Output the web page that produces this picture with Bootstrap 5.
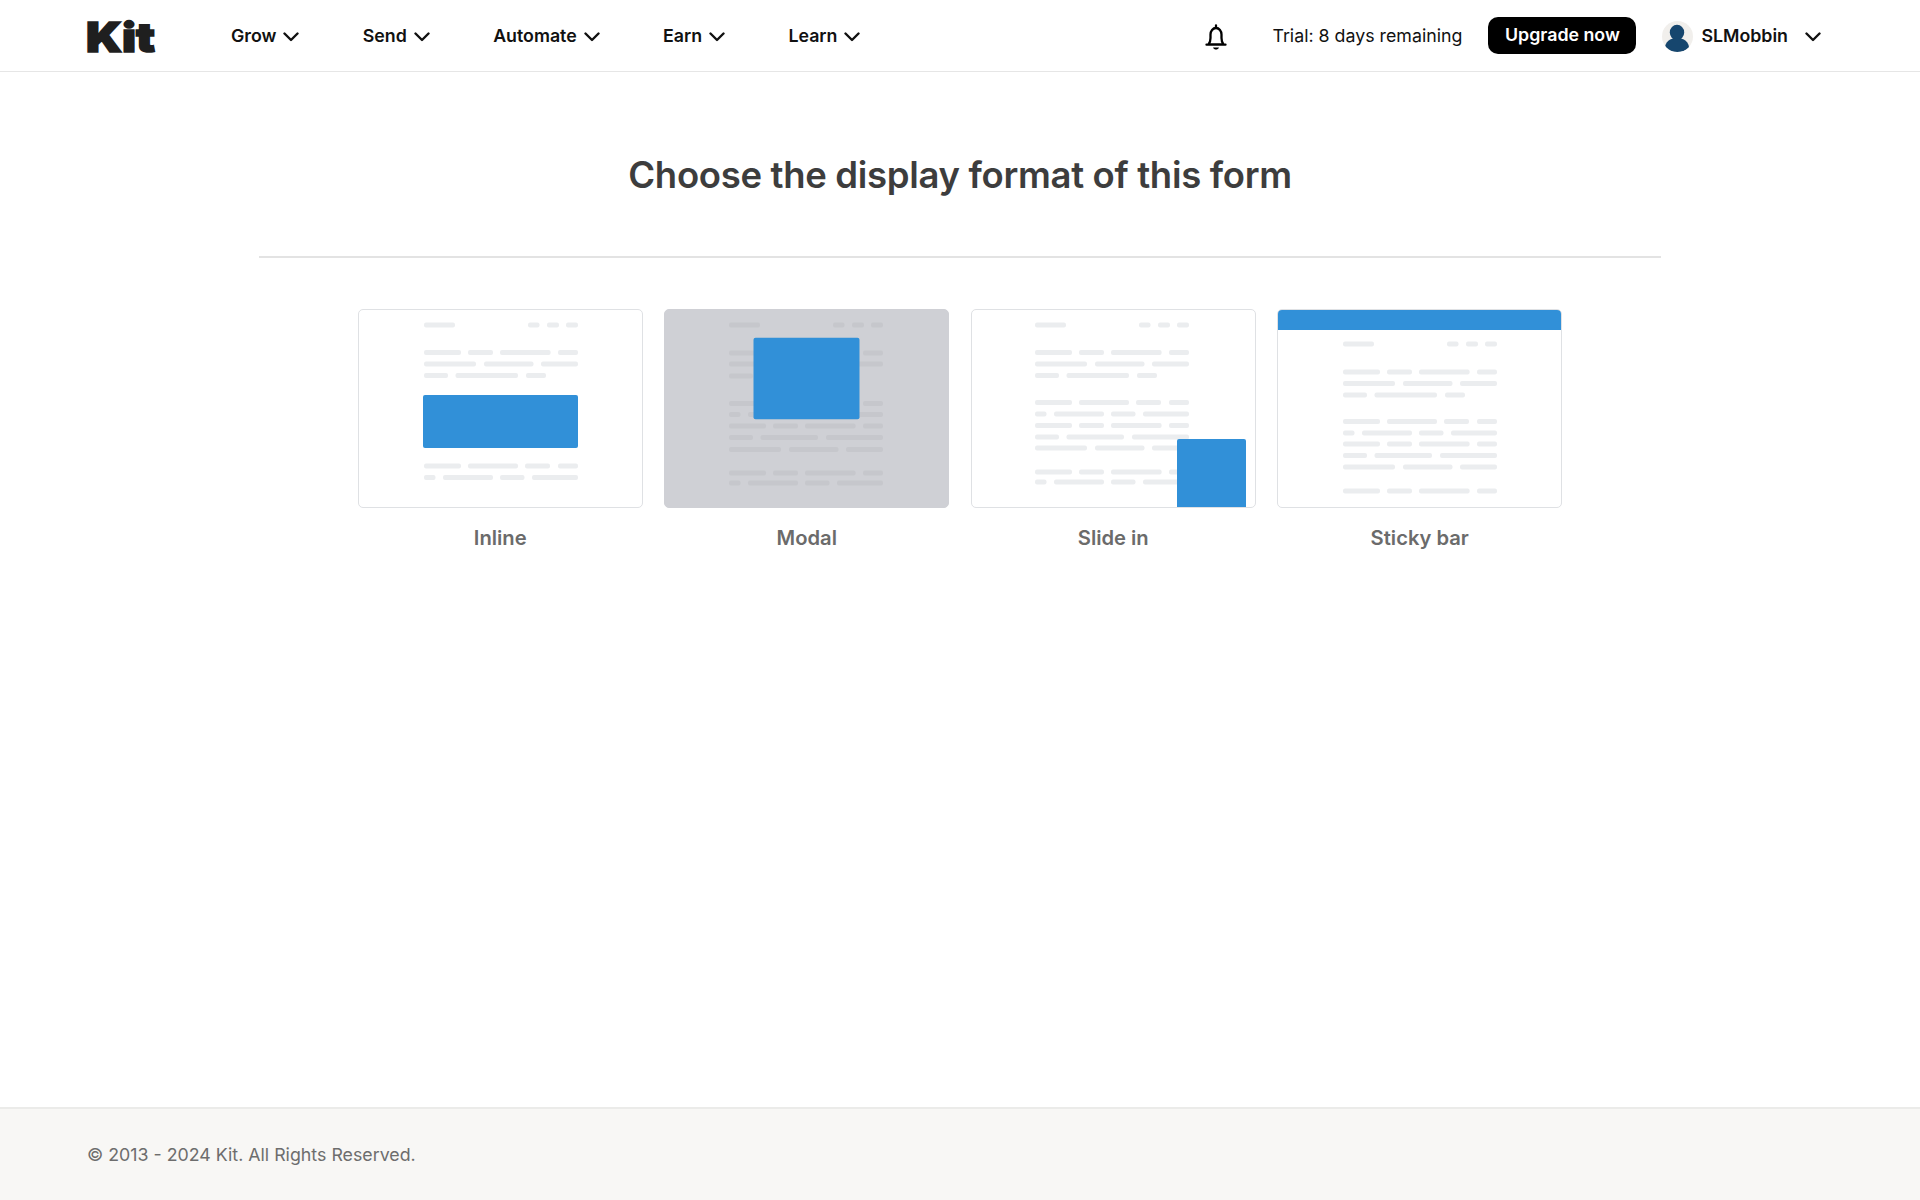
<!doctype html>
<html lang="en">
<head>
<meta charset="utf-8">
<title>Kit</title>
<link href="https://cdn.jsdelivr.net/npm/bootstrap@5.3.0/dist/css/bootstrap.min.css" rel="stylesheet">
<style>
body{font-family:Inter,"Liberation Sans",sans-serif;color:#000;min-height:100vh;background:#fff}
.top-bar{height:72px;border-bottom:1px solid #e6e6e6;padding:2px 99px 0 86px;flex-wrap:nowrap;justify-content:flex-start}
.kit-logo{width:70px;height:50px;margin-right:75px;display:block;overflow:visible}
.kit-logo text{font-family:Inter,sans-serif;font-weight:900;font-size:41px;fill:#1f1f1f;stroke:#1f1f1f;stroke-width:1.6px}
.main-nav{gap:63.3px}
.main-nav .nav-link{padding:0;color:#111;font-weight:600;font-size:17.8px;display:flex;align-items:center;gap:7px}
.chev{width:16px;height:10px;display:block}
.trial-text{font-size:17.8px;color:#111;margin:0 26px 0 0}
.bell{width:22px;height:26px;margin-right:45px;display:block}
.btn-upgrade{background:#000;color:#fff;border:0;border-radius:10px;height:37px;width:148px;padding:0;font-size:17.8px;font-weight:600;margin-bottom:2px}
.btn-upgrade:hover{background:#000;color:#fff}
.user-box{margin-left:26px;gap:8px;font-size:17.8px;font-weight:600;color:#111}
.user-box .chev{margin-left:9px}
.avatar{width:31px;height:31px;display:block}
.page-title{font-size:36.5px;letter-spacing:-.32px;font-weight:600;color:#3d3d3d;text-align:center;margin:0;padding-top:81px;line-height:44px;height:184px}
.rule{width:1402px;margin:0 auto;border-top:2px solid #e3e3e3;opacity:1}
.tile-row{gap:21.5px;margin-top:51px}
.tile{width:285px}
.thumb{height:199px;border:1px solid #dfe1e4;border-radius:5px;overflow:hidden;background:#fff}
.thumb.dim{background:#cfd0d5;border-color:#cfd0d5}
.thumb svg{display:block;width:285px;height:198px;margin:-1px;color:#ebedef;filter:blur(.4px)}
.thumb.dim svg{color:#c6c7cc}
.blue{fill:#3190d8}
.tile-label{text-align:center;color:#6b6b6b;font-size:20.2px;font-weight:600;margin-top:18px;line-height:24px}
.page-foot{height:93px;background:#f8f7f5;border-top:2px solid #ebebe9;padding:2px 0 0 87px;font-size:17.8px;color:#6d6d6d}
</style>
</head>
<body class="d-flex flex-column">
<svg class="d-none" aria-hidden="true"><defs>
<g id="rH" fill="currentColor"><rect x="66" width="31" height="5" rx="2"/><rect x="170" width="11.5" height="5" rx="2"/><rect x="189" width="12" height="5" rx="2"/><rect x="208" width="12" height="5" rx="2"/></g>
<g id="rA" fill="currentColor"><rect x="66" width="37" height="5" rx="2"/><rect x="110" width="25" height="5" rx="2"/><rect x="142" width="50.6" height="5" rx="2"/><rect x="200" width="20" height="5" rx="2"/></g>
<g id="rB" fill="currentColor"><rect x="66" width="52" height="5" rx="2"/><rect x="126" width="49.5" height="5" rx="2"/><rect x="183" width="37" height="5" rx="2"/></g>
<g id="rC" fill="currentColor"><rect x="66" width="24" height="5" rx="2"/><rect x="97.5" width="62.5" height="5" rx="2"/><rect x="168" width="20" height="5" rx="2"/></g>
<g id="rD" fill="currentColor"><rect x="66" width="37" height="5" rx="2"/><rect x="110" width="50" height="5" rx="2"/><rect x="167" width="25" height="5" rx="2"/><rect x="200" width="20" height="5" rx="2"/></g>
<g id="rE" fill="currentColor"><rect x="66" width="11.5" height="5" rx="2"/><rect x="85" width="50" height="5" rx="2"/><rect x="142" width="24.5" height="5" rx="2"/><rect x="174" width="46" height="5" rx="2"/></g>
<g id="rF" fill="currentColor"><rect x="66" width="24" height="5" rx="2"/><rect x="97.5" width="57.5" height="5" rx="2"/><rect x="163" width="57" height="5" rx="2"/></g>
<path id="chevShape" d="M1.5 1.5 8 8l6.500-6.500" fill="none" stroke="currentColor" stroke-width="2.400" stroke-linecap="round" stroke-linejoin="round"/>
</defs></svg>

<nav class="navbar top-bar bg-white">
  <a class="d-block" href="#" aria-label="Kit"><svg class="kit-logo" viewBox="0 0 70 50"><text x="0" y="40" textLength="69" lengthAdjust="spacingAndGlyphs">Kit</text></svg></a>
  <ul class="nav main-nav">
    <li class="nav-item"><a class="nav-link" href="#">Grow <svg class="chev" viewBox="0 0 16 10"><use href="#chevShape"/></svg></a></li>
    <li class="nav-item"><a class="nav-link" href="#">Send <svg class="chev" viewBox="0 0 16 10"><use href="#chevShape"/></svg></a></li>
    <li class="nav-item"><a class="nav-link" href="#">Automate <svg class="chev" viewBox="0 0 16 10"><use href="#chevShape"/></svg></a></li>
    <li class="nav-item"><a class="nav-link" href="#">Earn <svg class="chev" viewBox="0 0 16 10"><use href="#chevShape"/></svg></a></li>
    <li class="nav-item"><a class="nav-link" href="#">Learn <svg class="chev" viewBox="0 0 16 10"><use href="#chevShape"/></svg></a></li>
  </ul>
  <div class="d-flex align-items-center ms-auto">
    <svg class="bell" viewBox="0 0 22 26"><path d="M11 1.500v2.300M3.500 20.500c1.500-1.800 2-3.500 2-6.500v-3.500c0-3.500 2.300-6.500 5.500-6.500s5.500 3 5.500 6.500V14c0 3 .5 4.700 2 6.500zM1.500 20.700h19" fill="none" stroke="#000" stroke-width="2.300" stroke-linecap="round" stroke-linejoin="round"/><path d="M8 23.500h6c-.6 1.400-1.700 2-3 2s-2.400-.6-3-2z" fill="#000"/></svg>
    <p class="trial-text">Trial: 8 days remaining</p>
    <button class="btn btn-upgrade" type="button">Upgrade now</button>
    <div class="d-flex align-items-center user-box">
      <svg class="avatar" viewBox="0 0 31 31"><clipPath id="avClip"><circle cx="15.500" cy="15.500" r="15.500"/></clipPath><circle cx="15.500" cy="15.500" r="15.500" fill="#f1efec"/><ellipse cx="15" cy="11.500" rx="7.200" ry="7.800" fill="#16466e"/><path d="M3 27c0-6 5-10 12-10s12 4 12 10c-3 2.700-7 4-12 4s-9-1.300-12-4z" fill="#16466e" clip-path="url(#avClip)"/></svg>
      <span>SLMobbin</span>
      <svg class="chev" viewBox="0 0 16 10"><use href="#chevShape"/></svg>
    </div>
  </div>
</nav>

<main class="flex-grow-1">
  <h1 class="page-title">Choose the display format of this form</h1>
  <hr class="rule my-0">
  <div class="d-flex justify-content-center tile-row">
    <div class="tile">
      <div class="thumb"><svg viewBox="0 0 285 198">
        <use href="#rH" y="13.500"/><use href="#rA" y="41"/><use href="#rB" y="52.500"/><use href="#rC" y="64"/>
        <rect class="blue" x="65" y="86" width="155" height="53" rx="2"/>
        <use href="#rD" y="154.500"/><use href="#rE" y="166"/>
      </svg></div>
      <div class="tile-label">Inline</div>
    </div>
    <div class="tile">
      <div class="thumb dim"><svg viewBox="0 0 285 198">
        <use href="#rH" x="-1" y="13.500"/><use href="#rA" x="-1" y="41.500"/><use href="#rB" x="-1" y="52.500"/><use href="#rC" x="-1" y="64.500"/>
        <use href="#rD" x="-1" y="92"/><use href="#rE" x="-1" y="103"/><use href="#rA" x="-1" y="114.500"/><use href="#rF" x="-1" y="126"/><use href="#rB" x="-1" y="138"/><use href="#rA" x="-1" y="161.500"/><use href="#rE" x="-1" y="171.500"/>
        <rect class="blue" x="89.500" y="28.700" width="106" height="81.500" rx="2"/>
      </svg></div>
      <div class="tile-label">Modal</div>
    </div>
    <div class="tile">
      <div class="thumb"><svg viewBox="0 0 285 198">
        <use href="#rH" x="-2" y="13.500"/><use href="#rA" x="-2" y="41"/><use href="#rB" x="-2" y="52.500"/><use href="#rC" x="-2" y="64"/>
        <use href="#rD" x="-2" y="91"/><use href="#rE" x="-2" y="102.500"/><use href="#rA" x="-2" y="114"/><use href="#rF" x="-2" y="125.500"/><use href="#rB" x="-2" y="136.500"/><use href="#rA" x="-2" y="160.500"/><use href="#rE" x="-2" y="170.500"/>
        <rect class="blue" x="206" y="130" width="69" height="70" rx="2"/>
      </svg></div>
      <div class="tile-label">Slide in</div>
    </div>
    <div class="tile">
      <div class="thumb"><svg viewBox="0 0 285 198">
        <rect class="blue" x="0" y="0" width="285" height="21"/>
        <use href="#rH" y="32.500"/><use href="#rA" y="60.500"/><use href="#rB" y="72"/><use href="#rC" y="83.500"/>
        <use href="#rD" y="110"/><use href="#rE" y="121.500"/><use href="#rA" y="132.500"/><use href="#rF" y="144"/><use href="#rB" y="155.500"/><use href="#rA" y="179.500"/>
      </svg></div>
      <div class="tile-label">Sticky bar</div>
    </div>
  </div>
</main>

<footer class="page-foot d-flex align-items-center">© 2013 - 2024 Kit. All Rights Reserved.</footer>
<script src="https://cdn.jsdelivr.net/npm/bootstrap@5.3.0/dist/js/bootstrap.bundle.min.js"></script>
</body>
</html>
